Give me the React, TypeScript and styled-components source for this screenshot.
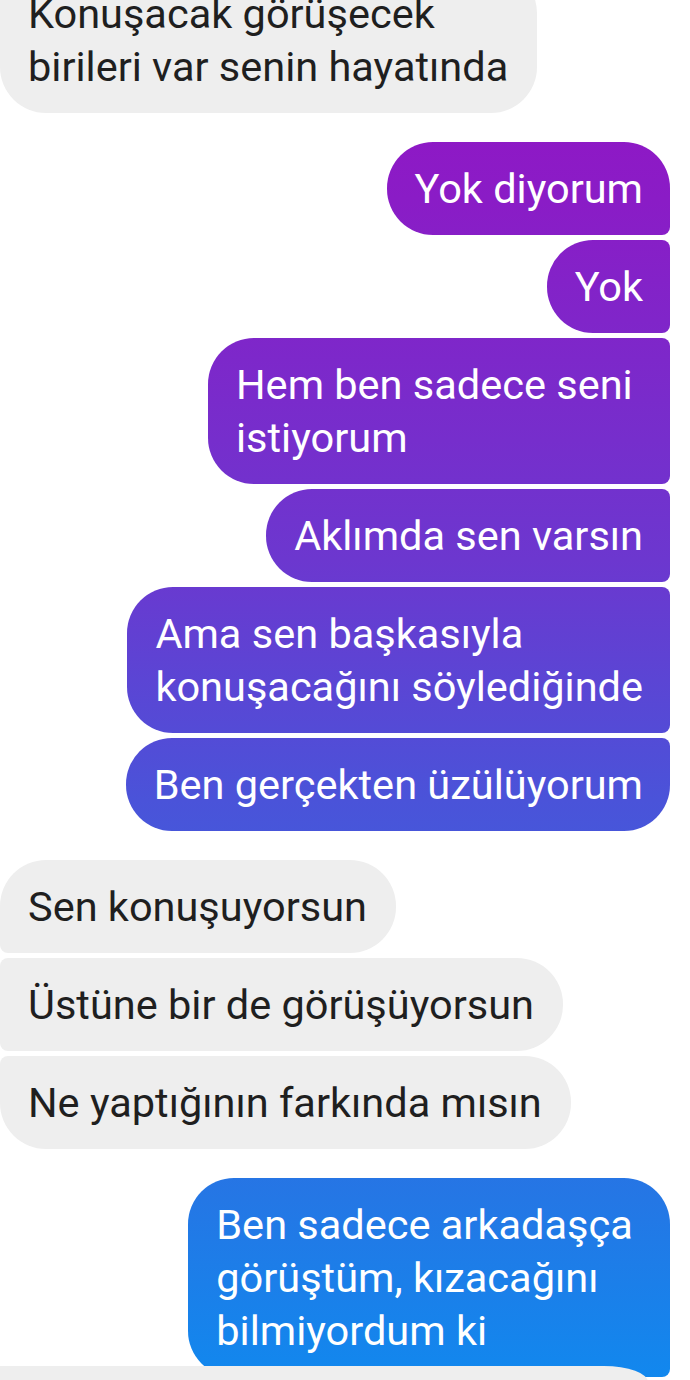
import React from "react";
import styled, { createGlobalStyle, css } from "styled-components";

const GlobalStyle = createGlobalStyle`
  html, body {
    margin: 0;
    padding: 0;
    background: #ffffff;
    overflow: hidden;
  }
  * { box-sizing: border-box; }
`;

type Side = "in" | "out";
type Pos = "first" | "middle" | "last" | "single";

const BIG = 46;
const SMALL = 8;

const Screen = styled.div`
  position: relative;
  width: 690px;
  height: 1380px;
  overflow: hidden;
  background: #ffffff;
  font-family: Roboto, "Noto Sans", "Liberation Sans", sans-serif;
  display: flex;
  flex-direction: column;
  padding: 0 20px 0 0;
`;

const Group = styled.div<{ $side: Side; $top?: number }>`
  display: flex;
  flex-direction: column;
  align-items: ${(p) => (p.$side === "out" ? "flex-end" : "flex-start")};
  gap: 5px;
  margin-top: ${(p) => (p.$top !== undefined ? p.$top : 29)}px;
`;

const radius = (side: Side, pos: Pos) => {
  const top = pos === "first" || pos === "single" ? BIG : SMALL;
  const bottom = pos === "last" || pos === "single" ? BIG : SMALL;
  if (side === "out") {
    return css`
      border-radius: ${BIG}px ${top}px ${bottom}px ${BIG}px;
    `;
  }
  return css`
    border-radius: ${top}px ${BIG}px ${BIG}px ${bottom}px;
  `;
};

const Bubble = styled.div<{ $side: Side; $pos: Pos }>`
  padding: 20px 27px 20px 28px;
  font-size: 41.5px;
  line-height: 53px;
  font-weight: 400;
  ${(p) => radius(p.$side, p.$pos)}
  ${(p) =>
    p.$side === "out"
      ? css`
          color: #ffffff;
          background: linear-gradient(
              180deg,
              #9612c4 0px,
              #8a1cc6 200px,
              #6c37cf 560px,
              #4a53d9 800px,
              #2477e5 1200px,
              #1188ee 1380px
            )
            fixed;
        `
      : css`
          color: #1f1f1f;
          background: #eeeeee;
          padding-right: 29px;
        `}
`;

const Line = styled.span`
  display: block;
  white-space: pre;
`;

const BottomBar = styled.div`
  position: absolute;
  left: 0;
  top: 1366px;
  width: 648px;
  height: 20px;
  background: #eeeeee;
  border-top-right-radius: 44px 16px;
`;

type Msg = { lines: string[] };

const Msgs: React.FC<{ side: Side; msgs: Msg[]; top?: number; lastOpen?: boolean }> = ({
  side,
  msgs,
  top,
  lastOpen,
}) => (
  <Group $side={side} $top={top}>
    {msgs.map((m, i) => {
      let pos: Pos;
      if (msgs.length === 1) pos = lastOpen ? "first" : "single";
      else if (i === 0) pos = "first";
      else if (i === msgs.length - 1) pos = lastOpen ? "middle" : "last";
      else pos = "middle";
      return (
        <Bubble key={i} $side={side} $pos={pos}>
          {m.lines.map((l, j) => (
            <Line key={j}>{l}</Line>
          ))}
        </Bubble>
      );
    })}
  </Group>
);

export default function App() {
  return (
    <>
      <GlobalStyle />
      <Screen>
        <Group $side="in" $top={-33}>
          <Bubble $side="in" $pos="last">
            <Line>Konuşacak görüşecek </Line>
            <Line>birileri var senin hayatında</Line>
          </Bubble>
        </Group>
        <Msgs
          side="out"
          msgs={[
            { lines: ["Yok diyorum"] },
            { lines: ["Yok"] },
            { lines: ["Hem ben sadece seni ", "istiyorum"] },
            { lines: ["Aklımda sen varsın"] },
            { lines: ["Ama sen başkasıyla ", "konuşacağını söylediğinde"] },
            { lines: ["Ben gerçekten üzülüyorum"] },
          ]}
        />
        <Msgs
          side="in"
          msgs={[
            { lines: ["Sen konuşuyorsun"] },
            { lines: ["Üstüne bir de görüşüyorsun"] },
            { lines: ["Ne yaptığının farkında mısın"] },
          ]}
        />
        <Msgs
          side="out"
          lastOpen
          msgs={[{ lines: ["Ben sadece arkadaşça ", "görüştüm, kızacağını ", "bilmiyordum ki"] }]}
        />
        <BottomBar />
      </Screen>
    </>
  );
}
